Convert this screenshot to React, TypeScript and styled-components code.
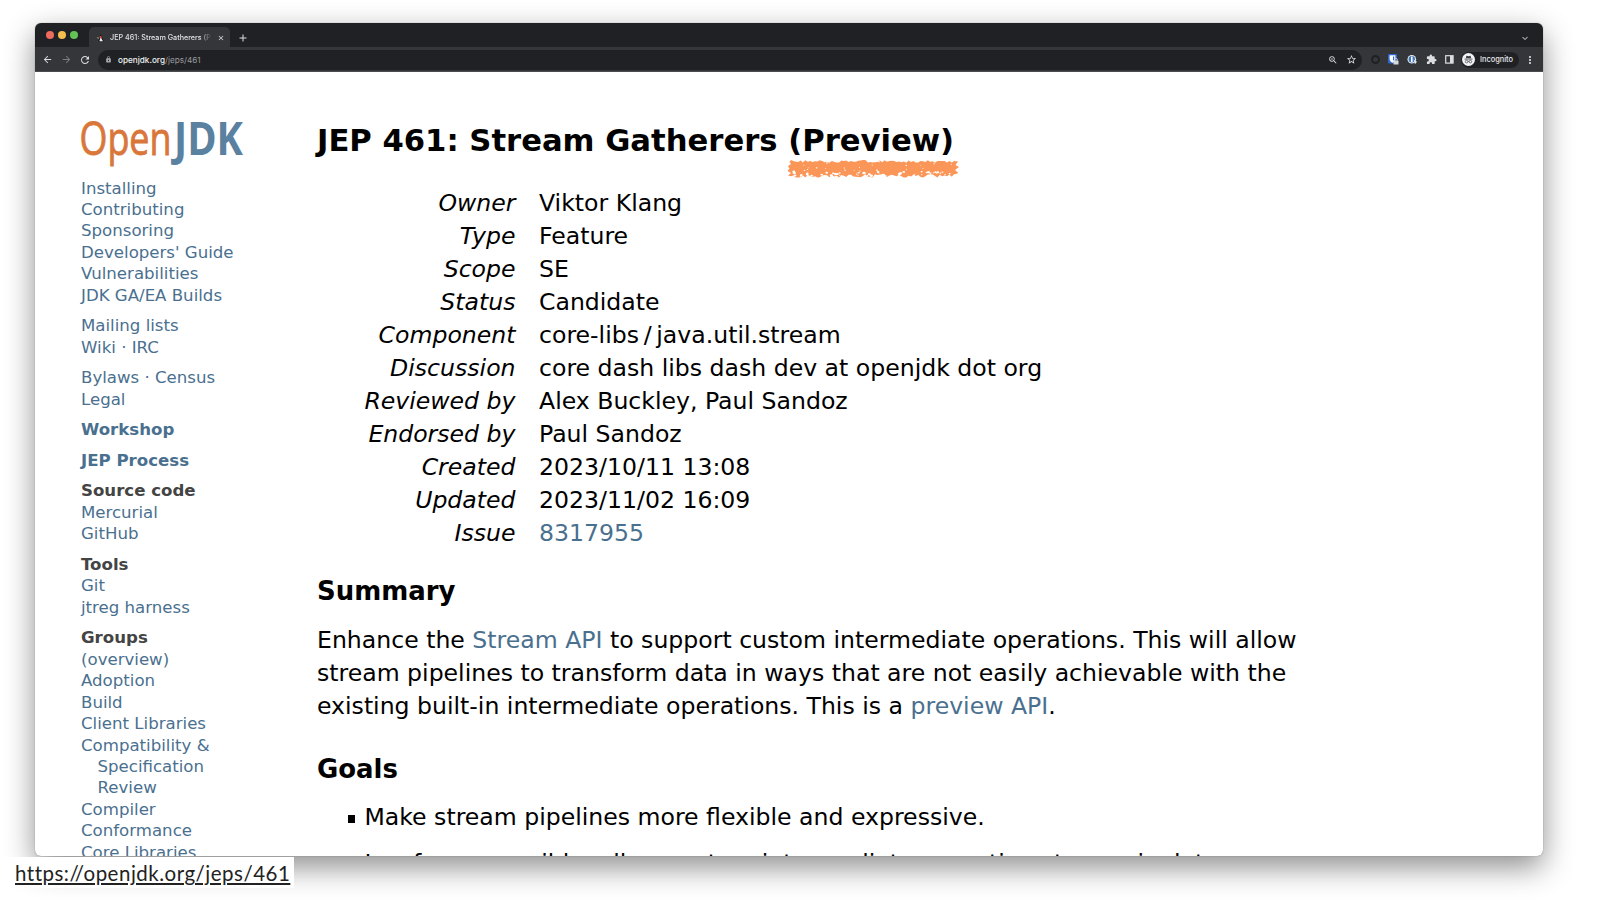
import React from "react";
import styled, { createGlobalStyle } from "styled-components";
import { MdArrowBack, MdArrowForward, MdRefresh, MdLock, MdStarBorder, MdExtension, MdMoreVert, MdClose, MdAdd, MdZoomIn } from "react-icons/md";
import { FaChevronDown } from "react-icons/fa6";

const LINK = "#4a708f";

type NavItem = { text: string; head?: boolean; bold?: boolean; indent?: boolean };

const nav: NavItem[][] = [
  [
    { text: "Installing" },
    { text: "Contributing" },
    { text: "Sponsoring" },
    { text: "Developers' Guide" },
    { text: "Vulnerabilities" },
    { text: "JDK GA/EA Builds" },
  ],
  [{ text: "Mailing lists" }, { text: "Wiki · IRC" }],
  [{ text: "Bylaws · Census" }, { text: "Legal" }],
  [{ text: "Workshop", bold: true }],
  [{ text: "JEP Process", bold: true }],
  [{ text: "Source code", head: true }, { text: "Mercurial" }, { text: "GitHub" }],
  [{ text: "Tools", head: true }, { text: "Git" }, { text: "jtreg harness" }],
  [
    { text: "Groups", head: true },
    { text: "(overview)" },
    { text: "Adoption" },
    { text: "Build" },
    { text: "Client Libraries" },
    { text: "Compatibility &" },
    { text: "Specification", indent: true },
    { text: "Review", indent: true },
    { text: "Compiler" },
    { text: "Conformance" },
    { text: "Core Libraries" },
  ],
];

const meta = [
  ["Owner", "Viktor Klang"],
  ["Type", "Feature"],
  ["Scope", "SE"],
  ["Status", "Candidate"],
  ["Component", "core-libs\u2009/\u2009java.util.stream"],
  ["Discussion", "core dash libs dash dev at openjdk dot org"],
  ["Reviewed by", "Alex Buckley, Paul Sandoz"],
  ["Endorsed by", "Paul Sandoz"],
  ["Created", "2023/10/11 13:08"],
  ["Updated", "2023/11/02 16:09"],
  ["Issue", "8317955"],
];

// small seeded generator so the chalk stroke is the same on every render
const seeded = (seed: number) => () => {
  seed = (seed * 16807) % 2147483647;
  return seed / 2147483647;
};

const Chalk = () => {
  const rnd = seeded(461);
  const top: string[] = [];
  const bottom: string[] = [];
  for (let x = 4; x <= 168; x += 2.4) {
    top.push(`${x.toFixed(1)},${(1 + rnd() * 2.8).toFixed(1)}`);
    bottom.unshift(`${x.toFixed(1)},${(15 + rnd() * 3.6).toFixed(1)}`);
  }
  const right = ["171,2.5", "168.5,6", "172,8", "168,11", "171.5,14", "167,15.5"];
  const left = ["1,16.5", "4,14", "0.5,12", "2.5,9.5", "1,7", "4,5", "2.5,3"];
  const specks = Array.from({ length: 75 }, () => {
    const low = rnd() < 0.75;
    return { x: 5 + rnd() * 160, y: low ? 12.5 + rnd() * 5 : 2 + rnd() * 10, r: 0.4 + rnd() * (low ? 0.8 : 0.3) };
  });
  return (
    <ChalkSvg width="172" height="20" viewBox="0 0 172 20">
      <polygon points={[...top, ...right, ...bottom, ...left].join(" ")} fill="#fb9659" />
      {specks.map((s, i) => (
        <ellipse key={i} cx={s.x} cy={s.y} rx={s.r * 1.4} ry={s.r} fill="#fff" />
      ))}
    </ChalkSvg>
  );
};

const Logo = () => (
  <LogoSvg width="164" height="52" viewBox="0 0 164 52">
    <text x="-1.5" y="39.5" fontSize="46.5" fill="#d9773a" stroke="#d9773a" strokeWidth=".9" textLength="92" lengthAdjust="spacingAndGlyphs">Open</text>
    <text x="93" y="39.5" fontSize="46.5" fontWeight="700" fill="#5a819f" textLength="69" lengthAdjust="spacingAndGlyphs">JDK</text>
  </LogoSvg>
);

const Duke = () => (
  <svg width="8" height="8" viewBox="0 0 8 8">
    <path d="M3.6 0L6.8 7.4H1.2Z" fill="#111" />
    <path d="M3.6 3L6 7.2H2.4Z" fill="#eee" />
    <circle cx="3.6" cy="3.2" r="1.1" fill="#e0523f" />
    <path d="M0 3.5L2.2 4.4" stroke="#ddd" strokeWidth=".6" />
  </svg>
);

const Bitwarden = () => (
  <svg width="11" height="11" viewBox="0 0 11 11">
    <rect width="9" height="9.5" rx="1" fill="#2f66d0" />
    <path d="M1.6 1.2H7.4V5C7.4 7 5.6 8.2 4.5 8.7C3.4 8.2 1.6 7 1.6 5Z" fill="#fff" />
    <path d="M5 2.4H6.2V5C6.2 5.7 5.5 6.4 5 6.8Z" fill="#2f66d0" />
    <rect x="5.5" y="6.5" width="5" height="4" rx=".5" fill="#d6d8dc" />
    <path d="M6.6 6.6V5.8a1.4 1.4 0 0 1 2.8 0V6.6" fill="none" stroke="#d6d8dc" strokeWidth=".8" />
  </svg>
);

const OnePass = () => (
  <svg width="11" height="11" viewBox="0 0 11 11">
    <circle cx="4.8" cy="5.2" r="4.3" fill="#e6ecf5" />
    <circle cx="4.8" cy="5.2" r="3.2" fill="#3e75b8" />
    <rect x="4" y="2.6" width="1.6" height="5.3" rx=".5" fill="#fff" />
    <path d="M6.5 5.4L10 7.8L8 10.2Z" fill="#dfe4ea" />
  </svg>
);

const SidePanel = () => (
  <svg width="9" height="9" viewBox="0 0 9 9">
    <rect x=".7" y=".7" width="7.4" height="7.4" fill="none" stroke="#dcdde0" strokeWidth="1.2" />
    <rect x="5" y="1" width="3" height="7" fill="#dcdde0" />
  </svg>
);

const Spy = () => (
  <svg width="13" height="13" viewBox="0 0 13 13">
    <circle cx="6.5" cy="6.5" r="6.5" fill="#f1f2f3" />
    <path d="M4.4 2.8L6.5 3.2L8.6 2.8L9.2 5.2H3.8Z" fill="#3c4043" />
    <path d="M2.5 6.1H10.5" stroke="#3c4043" strokeWidth=".8" />
    <circle cx="4.6" cy="8.6" r="1.3" fill="none" stroke="#3c4043" strokeWidth=".7" />
    <circle cx="8.4" cy="8.6" r="1.3" fill="none" stroke="#3c4043" strokeWidth=".7" />
    <path d="M5.9 8.4H7.1" stroke="#3c4043" strokeWidth=".6" />
  </svg>
);

export default () => (
  <React.Fragment>
    <GlobalStyle />
    <Stage>
      <BrowserWindow>
        <TabStrip>
          <Lights>
            <Light $color="#ed6a5e" />
            <Light $color="#f4be4f" />
            <Light $color="#61c454" />
          </Lights>
          <Tab>
            <Duke />
            <TabTitle>JEP 461: Stream Gatherers (P</TabTitle>
            <MdClose size={8} />
          </Tab>
          <NewTab>
            <MdAdd size={12} />
          </NewTab>
          <TabMenu>
            <FaChevronDown size={6} />
          </TabMenu>
        </TabStrip>
        <Toolbar>
          <NavButton><MdArrowBack size={11} /></NavButton>
          <NavButton $dim><MdArrowForward size={11} /></NavButton>
          <NavButton><MdRefresh size={12} /></NavButton>
          <AddressBar>
            <MdLock size={7} color="#a5a7aa" />
            <Address>
              openjdk.org<Path>/jeps/461</Path>
            </Address>
            <MdZoomIn size={10} />
            <MdStarBorder size={11} />
          </AddressBar>
          <Extensions>
            <Ring />
            <Bitwarden />
            <OnePass />
            <MdExtension size={11} />
            <SidePanel />
          </Extensions>
          <Incognito>
            <Spy />
            Incognito
          </Incognito>
          <MdMoreVert size={12} />
        </Toolbar>
        <Page>
          <Sidebar>
            <Logo />
            {nav.map((group, i) => (
              <NavGroup key={i}>
                {group.map((item) => (
                  <NavLine key={item.text} $head={item.head} $bold={item.bold} $indent={item.indent}>
                    {item.text}
                  </NavLine>
                ))}
              </NavGroup>
            ))}
          </Sidebar>
          <Article>
            <Title>
              JEP 461: Stream Gatherers{" "}
              <Marked>
                (Preview)
                <Chalk />
              </Marked>
            </Title>
            <MetaTable>
              {meta.map(([label, value]) => (
                <React.Fragment key={label}>
                  <MetaLabel>{label}</MetaLabel>
                  <MetaValue>{label === "Issue" ? <Link>{value}</Link> : value}</MetaValue>
                </React.Fragment>
              ))}
            </MetaTable>
            <Heading $gap={23}>Summary</Heading>
            <Paragraph>
              Enhance the <Link>Stream API</Link> to support custom intermediate operations. This will allow
              <br />
              stream pipelines to transform data in ways that are not easily achievable with the
              <br />
              existing built-in intermediate operations. This is a <Link>preview API</Link>.
            </Paragraph>
            <Heading $gap={28}>Goals</Heading>
            <Goals>
              <Goal>Make stream pipelines more flexible and expressive.</Goal>
              <Goal>Insofar as possible, allow custom intermediate operations to manipulate</Goal>
            </Goals>
          </Article>
        </Page>
      </BrowserWindow>
      <Caption>https://openjdk.org/jeps/461</Caption>
    </Stage>
  </React.Fragment>
);

const GlobalStyle = createGlobalStyle`
  body {
    margin: 0;
    background: #fff;
  }
  * {
    box-sizing: border-box;
  }
`;

const Stage = styled.div`
  position: relative;
  width: 1600px;
  height: 900px;
  padding: 23px 57px 44px 35px;
  overflow: hidden;
  background: #fff;
`;

const BrowserWindow = styled.div`
  display: flex;
  flex-direction: column;
  height: 833px;
  border-radius: 6px;
  overflow: hidden;
  background: #fff;
  box-shadow: 0 0 1px rgba(0, 0, 0, 0.5), 0 11px 30px rgba(0, 0, 0, 0.45);
`;

const TabStrip = styled.div`
  display: flex;
  align-items: flex-end;
  height: 24px;
  padding-left: 11px;
  background: #202124;
  color: #dfe0e3;
`;

const Lights = styled.div`
  display: flex;
  align-items: center;
  gap: 4px;
  height: 24px;
`;

const Light = styled.span<{ $color: string }>`
  width: 8px;
  height: 8px;
  border-radius: 50%;
  background: ${(p) => p.$color};
`;

const Tab = styled.div`
  display: flex;
  align-items: center;
  gap: 5px;
  width: 141px;
  height: 20px;
  margin-left: 11px;
  padding: 1px 5px 0 8px;
  border-radius: 5px 5px 0 0;
  background: #35363a;
`;

const TabTitle = styled.div`
  flex: 1;
  overflow: hidden;
  white-space: nowrap;
  font: 500 7.2px/12px Inter, sans-serif;
  mask-image: linear-gradient(to right, #000 88%, transparent);
`;

const NewTab = styled.div`
  display: flex;
  align-items: center;
  height: 20px;
  margin-left: 7px;
  padding-top: 1px;
`;

const TabMenu = styled(NewTab)`
  margin-left: auto;
  margin-right: 15px;
`;

const Toolbar = styled.div`
  display: flex;
  align-items: center;
  height: 25px;
  padding: 1px 7px 0 6px;
  background: #35363a;
  border-bottom: 1px solid #4b4c50;
  color: #dcdde0;
`;

const NavButton = styled.div<{ $dim?: boolean }>`
  display: flex;
  justify-content: center;
  width: 12px;
  margin-right: 7px;
  color: ${(p) => (p.$dim ? "#7c7d81" : "#dcdde0")};
`;

const AddressBar = styled.div`
  display: flex;
  align-items: center;
  flex: 1;
  gap: 8px;
  height: 20px;
  padding: 0 5px 0 7px;
  border-radius: 10px;
  background: #202124;
`;

const Address = styled.div`
  flex: 1;
  margin-left: -2px;
  font: 500 8.2px/12px Inter, sans-serif;
  color: #f1f1f2;
`;

const Path = styled.span`
  font-weight: 400;
  color: #999a9d;
`;

const Extensions = styled.div`
  display: flex;
  align-items: center;
  gap: 8px;
  margin: 0 7px 0 9px;
`;

const Ring = styled.span`
  width: 9px;
  height: 9px;
  border: 2px solid #1f2023;
  border-radius: 50%;
`;

const Incognito = styled.div`
  display: flex;
  align-items: center;
  gap: 5px;
  height: 16px;
  padding: 0 6px 0 1px;
  margin-right: 5px;
  border-radius: 8px;
  background: #202124;
  font: 500 7.4px/12px Inter, sans-serif;
  color: #e8e9eb;
`;

const Page = styled.div`
  display: flex;
  flex: 1;
  min-height: 0;
  overflow: hidden;
  font-family: "DejaVu Sans", sans-serif;
`;

const Sidebar = styled.div`
  flex: none;
  width: 236px;
  padding: 43px 0 0 46px;
  font-size: 16.6px;
  line-height: 21.43px;
`;

const LogoSvg = styled.svg`
  display: block;
  margin-bottom: 10.5px;
  overflow: visible;
  font-family: "Open Sans", sans-serif;
`;

const NavGroup = styled.div`
  margin-bottom: 9.15px;
`;

const NavLine = styled.div<{ $head?: boolean; $bold?: boolean; $indent?: boolean }>`
  padding-left: ${(p) => (p.$indent ? "16.5px" : "0")};
  font-weight: ${(p) => (p.$head || p.$bold ? 700 : 400)};
  color: ${(p) => (p.$head ? "#444" : LINK)};
  white-space: nowrap;
`;

const Article = styled.div`
  flex: 1;
  padding: 47px 0 0 46px;
  font-size: 23.58px;
  line-height: 33px;
  color: #000;
  white-space: nowrap;
`;

const Title = styled.h1`
  margin: 0;
  font-size: 30.65px;
  line-height: 43px;
`;

const Marked = styled.span`
  position: relative;
`;

const ChalkSvg = styled.svg`
  position: absolute;
  left: -1px;
  top: 36px;
`;

const MetaTable = styled.div`
  display: grid;
  grid-template-columns: 198.5px auto;
  column-gap: 23.5px;
  margin-top: 25px;
`;

const MetaLabel = styled.div`
  font-style: italic;
  text-align: right;
`;

const MetaValue = styled.div``;

const Link = styled.span`
  color: ${LINK};
`;

const Heading = styled.h2<{ $gap: number }>`
  margin: ${(p) => p.$gap}px 0 0;
  font-size: 25.95px;
  line-height: 36px;
`;

const Paragraph = styled.p`
  margin: 15px 0 0;
`;

const Goals = styled.ul`
  margin: 14px 0 0;
  padding-left: 30.5px;
  list-style: none;
`;

const Goal = styled.li`
  display: flex;
  align-items: center;
  gap: 9.5px;
  margin-bottom: 12.6px;

  &::before {
    content: "";
    width: 7.5px;
    height: 8px;
    margin-top: 2px;
    background: #000;
  }
`;

const Caption = styled.div`
  position: absolute;
  left: 0;
  top: 857px;
  width: 294px;
  height: 31px;
  padding-left: 15px;
  background: #fff;
  font: 20.5px/33px Lato, sans-serif;
  letter-spacing: 0.5px;
  color: #222;
  white-space: nowrap;
  text-decoration: underline;
`;
